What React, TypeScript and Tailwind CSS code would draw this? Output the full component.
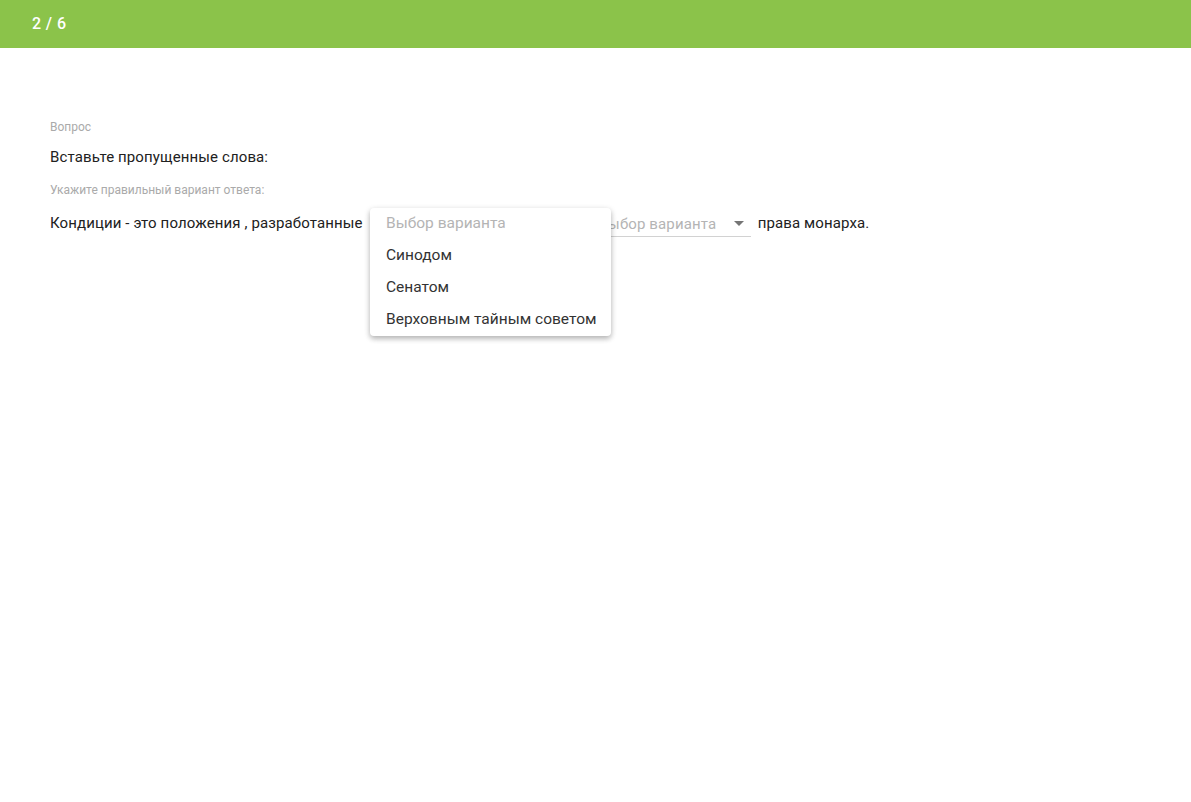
import React from 'react';

const options = ['Синодом', 'Сенатом', 'Верховным тайным советом'];

const Arrow: React.FC = () => (
  <svg viewBox="0 0 24 24" className="absolute right-0 top-1/2 -translate-y-1/2 w-6 h-6 fill-[#757575]">
    <path d="M7 10l5 5 5-5z" />
  </svg>
);

const SelectBox: React.FC<{ width: string }> = ({ width }) => (
  <div className={`relative ${width} h-[26px] border-b border-[#d2d2d2] shrink-0`}>
    <div className="h-full pr-8 overflow-hidden whitespace-nowrap text-[#b4b4b4] leading-[26px]">Выбор варианта</div>
    <Arrow />
  </div>
);

export default function App() {
  return (
    <div className="min-h-screen bg-white text-[#212121] font-['Roboto',sans-serif]">
      <div className="h-12 bg-[#8bc34a] flex items-center px-8">
        <span className="text-white text-[16px] font-medium tracking-wide">2 / 6</span>
      </div>

      <div className="px-[50px] pt-[70px]">
        <div className="text-[12px] text-[#aaaaaa]">Вопрос</div>
        <div className="mt-[10px] text-[15px] tracking-[0.12px]">Вставьте пропущенные слова:</div>
        <div className="mt-[12px] text-[12px] text-[#aaaaaa]">Укажите правильный вариант ответа:</div>

        <div className="relative mt-[12px] flex items-center text-[15px] tracking-[0.12px]">
          <span>Кондиции - это положения , разработанные</span>
          <div className="ml-[8px]">
            <SelectBox width="w-[220px]" />
          </div>
          <div className="ml-[8px]">
            <SelectBox width="w-[152px]" />
          </div>
          <span className="ml-[7px]">права монарха.</span>

          <div className="absolute left-[320px] top-[-3px] w-[241px] bg-white rounded shadow-[0_2px_6px_rgba(0,0,0,0.2),0_3px_5px_rgba(0,0,0,0.14)] z-10 text-[15.5px] tracking-normal">
            <div className="h-8 px-4 flex items-center text-[#b4b4b4] whitespace-nowrap">Выбор варианта</div>
            {options.map((o) => (
              <div key={o} className="h-8 px-4 flex items-center text-[#333] whitespace-nowrap">{o}</div>
            ))}
          </div>
        </div>
      </div>
    </div>
  );
}
